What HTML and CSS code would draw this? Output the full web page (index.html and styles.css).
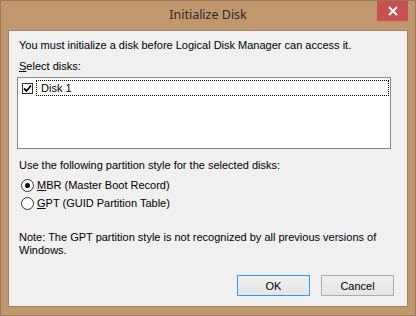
FILE: index.html
```html
<!DOCTYPE html>
<html lang="en">
<head>
    <meta charset="UTF-8">
    <title>Initialize Disk</title>
    <link rel="stylesheet" href="styles.css">
</head>
<body>
    <div class="window">
        <div class="titlebar">
            <span></span>
            <div class="title">Initialize Disk</div>
            <div class="close">
                <svg width="10" height="10" viewBox="0 0 10 10">
                    <path d="M1 1 L9 9 M9 1 L1 9" stroke="#fff" stroke-width="2"/>
                </svg>
            </div>
        </div>
        <div class="client">
            <p class="intro">You must initialize a disk before Logical Disk Manager can access it.</p>
            <p class="label"><u>S</u>elect disks:</p>
            <div class="listbox">
                <div class="item">
                    <span class="checkbox">
                        <svg width="9" height="9" viewBox="0 0 9 9">
                            <path d="M1 4.5 L3.5 7 L8 1.5" stroke="#000" stroke-width="1.8" fill="none"/>
                        </svg>
                    </span>
                    <span class="item-text">Disk 1</span>
                </div>
            </div>
            <p class="label style-label">Use the following partition style for the selected disks:</p>
            <div class="radios">
                <label class="radio"><span class="dot checked"></span><span><u>M</u>BR (Master Boot Record)</span></label>
                <label class="radio"><span class="dot"></span><span><u>G</u>PT (GUID Partition Table)</span></label>
            </div>
            <p class="note">Note: The GPT partition style is not recognized by all previous versions of Windows.</p>
            <div class="buttons">
                <button class="button default">OK</button>
                <button class="button">Cancel</button>
            </div>
        </div>
    </div>
</body>
</html>
```

FILE: styles.css
```css
* {
    box-sizing: border-box;
}

body {
    margin: 0;
    font-family: "Liberation Sans", Arial, sans-serif;
    font-size: 11px;
    color: #000;
}

.window {
    width: 416px;
    height: 316px;
    display: flex;
    flex-direction: column;
    background-color: #c1976f;
    border: 1px solid #9b7858;
}

.titlebar {
    height: 29px;
    display: grid;
    grid-template-columns: 1fr auto 1fr;
    padding-right: 7px;
    padding-left: 7px;
}

.title {
    font-family: "Noto Sans", sans-serif;
    font-size: 12.5px;
    color: #2b2b2b;
    padding-top: 5px;
}

.close {
    justify-self: end;
    width: 31px;
    height: 20px;
    background-color: #c75050;
    display: flex;
    justify-content: center;
    align-items: center;
}

.client {
    flex: 1;
    margin: 0 7px 8px 7px;
    background-color: #f0f0f0;
    border: 1px solid #a08466;
    padding: 8px 16px 0 8px;
    display: flex;
    flex-direction: column;
}

p {
    margin: 0;
    line-height: 13px;
    padding-left: 2px;
}

.label {
    margin-top: 8px;
}

.listbox {
    margin-top: 4px;
    height: 72px;
    background-color: #fff;
    border: 1px solid #828790;
    padding: 2px 1px;
}

.item {
    display: flex;
    align-items: center;
    gap: 3px;
    height: 16px;
}

.checkbox {
    width: 11px;
    height: 11px;
    margin-left: 3px;
    border: 1px solid #333;
    background-color: #fff;
    display: flex;
    justify-content: center;
    align-items: center;
}

.item-text {
    flex: 1;
    height: 16px;
    line-height: 14px;
    padding-left: 4px;
    border: 1px dotted #000;
}

.style-label {
    margin-top: 10px;
}

.radios {
    margin-top: 7px;
    display: flex;
    flex-direction: column;
    gap: 5px;
}

.radio {
    display: flex;
    align-items: center;
    gap: 3px;
    height: 13px;
    line-height: 13px;
    padding-left: 4px;
}

.dot {
    width: 13px;
    height: 13px;
    border: 1px solid #333;
    border-radius: 50%;
    background-color: #fff;
    display: flex;
    justify-content: center;
    align-items: center;
}

.dot.checked::after {
    content: "";
    width: 5px;
    height: 5px;
    border-radius: 50%;
    background-color: #000;
}

.note {
    margin-top: 21px;
}

.buttons {
    margin-top: 18px;
    margin-right: -3px;
    display: flex;
    justify-content: flex-end;
    gap: 11px;
}

.button {
    width: 73px;
    height: 21px;
    font-family: "Liberation Sans", Arial, sans-serif;
    font-size: 11px;
    color: #000;
    border: 1px solid #acacac;
    background: linear-gradient(#f0f0f0, #e5e5e5);
    padding: 0;
}

.button.default {
    border-color: #3399ff;
}
```
